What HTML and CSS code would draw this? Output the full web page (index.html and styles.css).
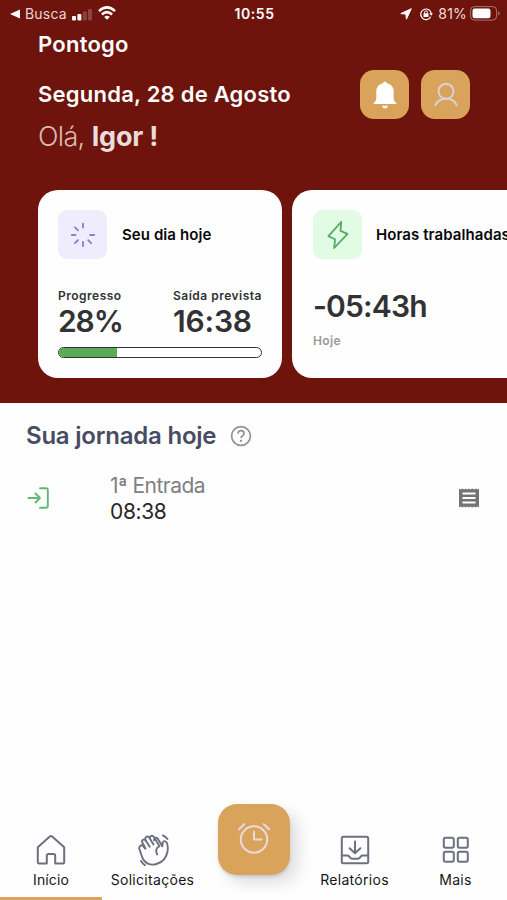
FILE: index.html
```html
<!DOCTYPE html>
<html lang="pt-BR">
<head>
<meta charset="utf-8">
<meta name="viewport" content="width=device-width, initial-scale=1">
<title>Pontogo</title>
<link rel="stylesheet" href="styles.css">
</head>
<body>
<div class="app">
  <header class="hero">
    <div class="status">
      <div class="status-left">
        <svg class="back" width="11" height="10" viewBox="0 0 11 10"><path d="M0 5 10 0.5V9.500Z" fill="#fff"/></svg>
        <span class="status-app">Busca</span>
        <svg class="signal" width="20" height="12" viewBox="0 0 20 12" fill="#fff"><rect y="7" width="4" height="4.5" rx="1"/><rect x="5.4" y="5" width="4" height="6.500" rx="1"/><rect x="10.900" y="2.500" width="4" height="9" rx="1" opacity=".2"/><rect x="16" y="0" width="4" height="11.500" rx="1" opacity=".2"/></svg>
        <svg class="wifi" width="18" height="14" viewBox="0 0 18 14" fill="none" stroke="#fff" stroke-width="2.500"><path d="M1 5.100Q9-2.300 17 5.100"/><path d="M3.900 8.500Q9 3.800 14.100 8.500"/><path d="M9 13.800 6.200 11Q9 8.600 11.800 11Z" fill="#fff" stroke="none"/></svg>
      </div>
      <span class="clock">10:55</span>
      <div class="status-right">
        <svg width="12" height="12" viewBox="0 0 12 12"><path d="M11.300.7 6.400 11.200 5.900 6.100.8 5.600Z" fill="#fff" stroke="#fff" stroke-width="1" stroke-linejoin="round"/></svg>
        <svg class="lock" width="14" height="14" viewBox="0 0 14 14" fill="none" stroke="#fff" stroke-width="1.200"><path d="M11.700 9.800A5.300 5.300 0 1 1 12.300 7"/><path d="M10.300 6.300h3.600L12.200 8.700Z" fill="#fff" stroke="none"/><rect x="4.500" y="6.300" width="5" height="3.700" rx=".5" fill="#fff" stroke="none"/><path d="M5.500 6.700V5.400a1.500 1.500 0 0 1 3 0v1.300" stroke-width="1"/></svg>
        <span class="percent">81%</span>
        <svg class="battery" width="30" height="15" viewBox="0 0 30 15"><rect x=".6" y=".6" width="26" height="13.500" rx="3.800" fill="none" stroke="#fff" stroke-opacity=".4"/><rect x="2.500" y="2.500" width="18" height="9.700" rx="2.200" fill="#fff"/><path d="M28.200 5v4.700q1.500-.8 1.500-2.350T28.200 5" fill="#fff" opacity=".4"/></svg>
      </div>
    </div>
    <h1 class="brand">Pontogo</h1>
    <div class="greeting">
      <div>
        <p class="date">Segunda, 28 de Agosto</p>
        <p class="hello"><span class="ola">Olá,</span> <b>Igor !</b></p>
      </div>
      <div class="actions">
        <button class="action" aria-label="Notificações"><svg width="24" height="28" viewBox="0 0 24 28" fill="#fff"><path d="M12 .5a2.100 2.100 0 0 0-2 1.700C6 3 3.300 6.300 3.300 10.200V17c0 2.200-1 3.700-2.700 5.300V23h22.800v-.7c-1.700-1.600-2.700-3.100-2.700-5.300v-6.800c0-3.900-2.700-7.200-6.700-8A2.100 2.100 0 0 0 12 .5Z"/><path d="M9 24.700h6c-.3 1.700-1.400 2.600-3 2.600s-2.700-.9-3-2.600Z"/></svg></button>
        <button class="action" aria-label="Perfil"><svg width="24" height="24" viewBox="0 0 24 24" fill="none" stroke="#d9d3dc" stroke-width="1.900" stroke-linecap="round"><circle cx="12" cy="8.300" r="7.500"/><path d="M1.300 22.300C3.200 18 7 15.800 12 15.800S20.800 18 22.700 22.300"/></svg></button>
      </div>
    </div>
    <div class="cards">
      <section class="card">
        <div class="card-head">
          <div class="tile lilac"><svg width="26" height="26" viewBox="0 0 26 26" stroke="#8c7fd0" stroke-width="1.900" stroke-linecap="round"><path d="M13 1.800V5.500M13 20v4M1.800 13H5.500M20.200 13h4M5 5.300 8 8.300M18.200 18.200l3 3M4.900 21.100l3-2.900"/></svg></div>
          <h2>Seu dia hoje</h2>
        </div>
        <div class="metrics">
          <div class="metric"><span class="label">Progresso</span><strong class="n-prog">28%</strong></div>
          <div class="metric"><span class="label">Saída prevista</span><strong>16:38</strong></div>
        </div>
        <div class="bar"><div class="fill" style="width:28.5%"></div></div>
      </section>
      <section class="card wide">
        <div class="card-head">
          <div class="tile mint"><svg width="24" height="30" viewBox="0 0 24 30" fill="none" stroke="#58a862" stroke-width="1.800" stroke-linejoin="round"><path d="M15.200 2 2.400 16.200 9 19.300 8.200 28 21.500 13.800 14.500 10.800Z"/></svg></div>
          <h2>Horas trabalhadas</h2>
        </div>
        <strong class="balance">-05:43h</strong>
        <span class="when">Hoje</span>
      </section>
    </div>
  </header>
  <main>
    <div class="journey">
      <h3>Sua jornada hoje</h3>
      <svg width="22" height="22" viewBox="0 0 22 22" fill="none" stroke="#929292" stroke-width="1.700"><circle cx="11" cy="11" r="9.400"/><path d="M8 8.700C8 6.700 9.200 5.700 11 5.700s3.100 1.100 3.100 2.700c0 2-3 2.400-3 4.600"/><path d="M11 14.700v2" stroke-width="2"/></svg>
    </div>
    <div class="entry">
      <svg class="enter" width="22" height="22" viewBox="0 0 22 22" fill="none" stroke="#63b873" stroke-width="1.900" stroke-linecap="round" stroke-linejoin="round"><path d="M1.500 11H13M8.500 6.500 13 11l-4.500 4.500M13 1.300h6a1.800 1.800 0 0 1 1.800 1.800v15.800a1.800 1.800 0 0 1-1.800 1.800h-6"/></svg>
      <div class="entry-text"><span class="entry-name">1ª Entrada</span><span class="entry-time">08:38</span></div>
      <svg class="receipt" width="20" height="20" viewBox="0 0 20 20"><path fill="#747478" fill-rule="evenodd" d="M0 .5 1.700 1.500 3.300.5 5 1.500 6.700.5 8.300 1.500 10 .5 11.700 1.500 13.300.5 15 1.500 16.700.5 18.300 1.500 20 .5v19L18.300 18.500l-1.600 1L15 18.500l-1.700 1L11.700 18.500 10 19.500 8.300 18.500l-1.600 1L5 18.500l-1.700 1L1.700 18.500 0 19.500ZM3.500 4.500v2h13v-2ZM3.500 9v2h13V9ZM3.500 13.500v2h13v-2Z"/></svg>
    </div>
  </main>
  <nav class="tabs">
    <a class="tab active"><svg width="30" height="30" viewBox="0 0 30 30" fill="none" stroke="#6d7080" stroke-width="2" stroke-linejoin="round"><path d="M1.800 12.200 13.800 1.500q1.200-1 2.400 0L28.200 12.200v15q0 1.300-1.300 1.300h-7.700v-7.800q0-1.700-1.700-1.700h-5q-1.700 0-1.700 1.700v7.800H3.100q-1.300 0-1.300-1.300Z"/></svg><span class="tab-home">Início</span></a>
    <a class="tab"><svg width="32" height="32" viewBox="0 0 32 32" fill="none" stroke="#6d7080" stroke-width="1.900" stroke-linecap="round" stroke-linejoin="round"><path d="M5.800 11.500C3.500 10.800 1.700 12.600 2.400 15L5.200 23.300C7.300 29.300 13.500 31.800 19.500 30 25.500 28.300 29.500 23.500 30.500 17.500 31 14 30.700 10 29.500 8.200 28.300 6.500 26 6.800 25.700 9L25.300 12.300 21 4.900C19.700 2.900 16.800 3.800 17.100 6.200"/><path d="M8.500 14.500 5.300 8.500C4.200 6.200 7.100 4.300 8.700 6.400L12.700 12.700"/><path d="M8.700 6.400 8.400 5.300C7.800 2.700 10.700 1.400 12.200 3.500L16.500 10.500"/><path d="M12.800 4.500C12.600 1.600 15.600.9 17.100 3.300L22.500 12.300C19.200 13.200 18.400 16.600 20.200 20.500M5.800 11.500 8 14.500"/><path d="M26 1.500Q28.500 2.300 30.500 5M4 27Q5.500 29.500 8 31.200"/></svg><span class="tab-req">Solicitações</span></a>
    <a class="tab punch-slot"><span class="punch"><svg width="34" height="32" viewBox="0 0 34 32" fill="none" stroke="#e9d9dd" stroke-width="2.100" stroke-linecap="round" stroke-linejoin="round"><circle cx="17" cy="17.500" r="13.200"/><path d="M17 9.800V17.500h7.500M2 7.300 7.200 2.200M32 7.300 26.800 2.200"/></svg></span></a>
    <a class="tab"><svg width="30" height="30" viewBox="0 0 30 30" fill="none" stroke="#6d7080" stroke-width="2" stroke-linecap="round" stroke-linejoin="round"><rect x="1.800" y="1.800" width="26.400" height="26.400" rx="1.500"/><path d="M15 6.500V18M9.600 13.200 15 18.300l5.400-5.100M1.800 20.400h5.400q1.200 0 1.900 1l1 1.300q.8 1 2 1h5.800q1.200 0 2-1l1-1.300q.7-1 1.900-1h5.400"/></svg><span class="tab-rel">Relatórios</span></a>
    <a class="tab"><svg width="30" height="30" viewBox="0 0 30 30" fill="none" stroke="#6d7080" stroke-width="2"><rect x="2.800" y="2.800" width="10" height="10" rx="1.800"/><rect x="16.800" y="2.800" width="10" height="10" rx="1.800"/><rect x="2.800" y="16.800" width="10" height="10" rx="1.800"/><rect x="16.800" y="16.800" width="10" height="10" rx="1.800"/></svg><span class="tab-more">Mais</span></a>
  </nav>
</div>
</body>
</html>
```
FILE: styles.css
```css
* { box-sizing: border-box; }
body { margin: 0; background: #fefefe; font-family: Inter, "Liberation Sans", sans-serif; }
h1, h2, h3, p { margin: 0; }
svg { display: block; flex: none; }
.app { width: 507px; height: 900px; display: flex; flex-direction: column; overflow: hidden; }
.hero { height: 403px; flex: none; background: #6e140c; color: #fff; }

.status { height: 28px; padding: 0 6px 0 10px; display: grid; grid-template-columns: 1fr auto 1fr; align-items: center; font-size: 14px; line-height: 28px; }
.status-left, .status-right { display: flex; align-items: center; }
.status-right { justify-content: flex-end; }
.status-app { margin-left: 4px; color: #e9d5d2; letter-spacing: .2px; }
.signal { margin-left: 5px; margin-top: 1px; }
.wifi { margin-left: 6px; margin-top: -2px; }
.clock { margin-right: 2px; font-weight: 600; letter-spacing: .6px; }
.lock { margin-left: 7px; }
.percent { margin-left: 5px; color: #f0dfdc; letter-spacing: .2px; }
.battery { margin-left: 3px; margin-right: 1px; margin-top: -1px; }

.brand { padding-left: 38px; height: 32px; font-size: 22px; font-weight: 600; line-height: 32px; letter-spacing: .25px; }
.greeting { display: flex; justify-content: space-between; padding: 10px 37px 0 38px; height: 130px; }
.date { margin-top: 8px; font-size: 22px; line-height: 32px; font-weight: 600; letter-spacing: .24px; white-space: nowrap; }
.hello { margin-top: 7px; font-size: 27px; line-height: 40px; letter-spacing: -.4px; color: #e9dcda; }
.ola { font-weight: 300; letter-spacing: -.7px; color: #dfb9b3; }
.hello b { font-weight: 700; letter-spacing: -.2px; }
.actions { display: flex; gap: 12px; }
.action { width: 49px; height: 49px; padding: 0; border: 0; border-radius: 14px; background: #d9a35b; display: grid; place-items: center; }

.cards { display: flex; gap: 10px; padding-left: 38px; overflow: hidden; }
.card { flex: none; width: 244px; height: 188px; border-radius: 20px; background: #fefefe; padding: 20px 20px 0; color: #323234; }
.wide { padding-left: 21px; }
.card-head { display: flex; align-items: center; gap: 15px; }
.wide .card-head { gap: 14px; }
.card h2 { font-size: 15px; line-height: 20px; font-weight: 600; letter-spacing: .08px; color: #080808; white-space: nowrap; }
.tile { flex: none; width: 49px; height: 49px; border-radius: 9px; display: grid; place-items: center; }
.lilac { background: #efedfd; }
.mint { background: #e1fbe5; }
.metrics { display: flex; justify-content: space-between; margin-top: 29px; }
.metric { display: flex; flex-direction: column; white-space: nowrap; }
.label { font-size: 12px; line-height: 16px; font-weight: 600; letter-spacing: .5px; }
.metric strong { font-size: 30px; line-height: 34px; font-weight: 600; letter-spacing: -.15px; }
.metric .n-prog { letter-spacing: -1.100px; }
.bar { margin-top: 9px; height: 11px; border: 1.500px solid #333; border-radius: 6px; overflow: hidden; }
.fill { height: 100%; background: #5aab55; }
.balance { display: block; margin-top: 28px; font-size: 30px; line-height: 38px; font-weight: 600; letter-spacing: -.85px; }
.when { display: block; margin-top: 8px; font-size: 12px; line-height: 16px; font-weight: 600; letter-spacing: .4px; color: #98989a; }

main { flex: 1; padding: 0 28px 0 26px; }
.journey { display: flex; align-items: center; gap: 14px; height: 36px; margin-top: 15px; }
.journey h3 { font-size: 24px; line-height: 36px; font-weight: 600; letter-spacing: -.22px; color: #484c63; }
.entry { display: flex; align-items: center; margin-top: 18px; height: 52px; }
.enter { margin-left: 1px; }
.entry-text { flex: 1; margin: 2px 0 0 61px; display: flex; flex-direction: column; align-items: flex-start; font-size: 21px; line-height: 26px; }
.entry-name { color: #808084; letter-spacing: -.5px; }
.entry-time { color: #29292b; letter-spacing: -.35px; }

.tabs { height: 100px; display: grid; grid-template-columns: 102px 101px 102px 99px 103px; }
.tab { height: 100px; padding-top: 34px; display: flex; flex-direction: column; align-items: center; font-size: 14px; line-height: 18px; color: #161618; border-bottom: 3px solid transparent; }
.tab svg { height: 32px; }
.tab > span:last-child { margin-top: 5px; }
.tab-home { letter-spacing: .1px; }
.tab-req { letter-spacing: .3px; }
.tab-rel { letter-spacing: .3px; }
.tab-more { letter-spacing: .3px; }
.active { border-color: #d9a35b; }
.punch-slot { padding-top: 4px; }
.tab > .punch:last-child { width: 72px; height: 71px; margin-top: 0; padding-bottom: 3px; border-radius: 19px; background: #d9a35b; display: grid; place-items: center; box-shadow: 8px 8px 16px rgba(0, 0, 0, .13), 0 2px 3px rgba(0, 0, 0, .12); }
```
